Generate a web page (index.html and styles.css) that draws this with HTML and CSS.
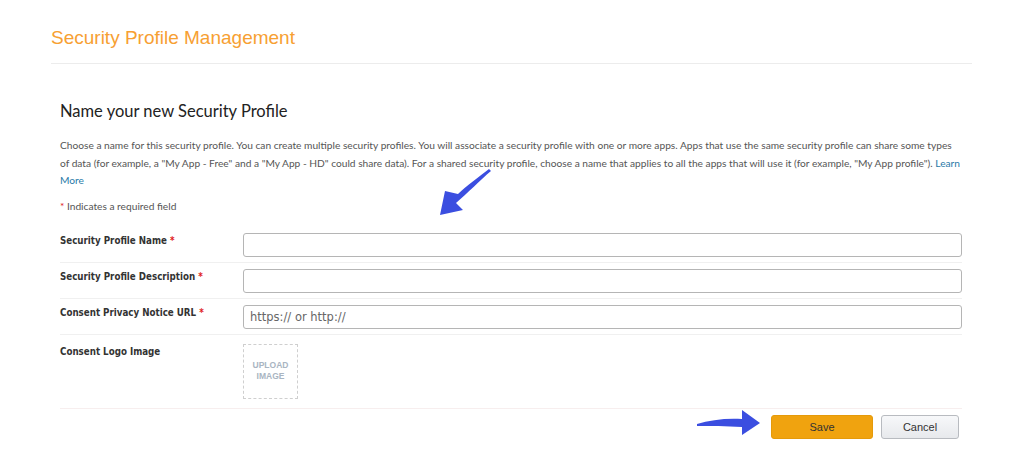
FILE: index.html
```html
<!DOCTYPE html>
<html lang="en">
<head>
    <meta charset="UTF-8">
    <title>Security Profile Management</title>
    <link rel="stylesheet" href="styles.css">
</head>
<body>
    <div class="page">
        <h1 class="page-title">Security Profile Management</h1>
        <div class="content">
            <h2>Name your new Security Profile</h2>
            <p class="intro">Choose a name for this security profile. You can create multiple security profiles. You will associate a security profile with one or more apps. Apps that use the same security profile can share some types of data (for example, a "My App - Free" and a "My App - HD" could share data). For a shared security profile, choose a name that applies to all the apps that will use it (for example, "My App profile"). <a href="#">Learn More</a></p>
            <p class="required-note"><span class="star">*</span> Indicates a required field</p>

            <form class="profile-form">
                <div class="row">
                    <label for="name">Security Profile Name <span class="star">*</span></label>
                    <input type="text" id="name">
                </div>
                <div class="row">
                    <label for="desc">Security Profile Description <span class="star">*</span></label>
                    <input type="text" id="desc">
                </div>
                <div class="row">
                    <label for="url">Consent Privacy Notice URL <span class="star">*</span></label>
                    <input type="text" id="url" placeholder="https:// or http://">
                </div>
                <div class="row row-logo">
                    <label>Consent Logo Image</label>
                    <div class="upload">UPLOAD<br>IMAGE</div>
                </div>
                <div class="actions">
                    <button type="button" class="btn btn-save">Save</button>
                    <button type="button" class="btn btn-cancel">Cancel</button>
                </div>
            </form>
        </div>

        <!-- annotation arrows -->
        <svg class="arrow arrow-down" width="70" height="60" viewBox="0 0 70 60">
            <path d="M59 9 C50 16 36 26 28 34 L15 31 L10 55 L33 50 L26 43 C38 33 50 20 61 11 Z" fill="#3b4ee0"/>
        </svg>
        <svg class="arrow arrow-right" width="75" height="36" viewBox="0 0 75 36">
            <path d="M7 19 C20 15 36 13 52 14 L52 5 L70 18 L52 30 L52 22 C36 21 20 21 7 21 Z" fill="#3b4ee0"/>
        </svg>
    </div>
</body>
</html>
```

FILE: styles.css
```css
body {
    margin: 0;
    background-color: #ffffff;
    font-family: Lato, "Open Sans", sans-serif;
    color: #333;
}
.page {
    position: relative;
    width: 921px;
    margin-left: 51px;
}
.page-title {
    margin: 0;
    padding-top: 27px;
    padding-bottom: 14px;
    font-family: "Liberation Sans", Arial, sans-serif;
    font-size: 19px;
    font-weight: normal;
    color: #f7a032;
    border-bottom: 1px solid #ececec;
}
.content {
    padding: 0 10px 0 9px;
}
h2 {
    margin: 37px 0 0 0;
    font-size: 16.5px;
    font-weight: normal;
    color: #222;
}
.intro {
    margin: 16px 0 0 0;
    font-size: 10.2px;
    line-height: 17.5px;
    color: #555;
}
.intro a {
    color: #2a7aa8;
    text-decoration: none;
}
.required-note {
    margin: 10px 0 0 0;
    font-size: 10.2px;
    color: #555;
}
.star {
    color: #e02020;
}
.profile-form {
    margin-top: 15px;
}
.row {
    display: flex;
    align-items: flex-start;
    padding: 6px 0 5px 0;
    border-bottom: 1px solid #f0f0f0;
}
.row label {
    width: 183px;
    padding-top: 2px;
    font-family: "DejaVu Sans", Verdana, sans-serif;
    font-stretch: condensed;
    font-size: 9.7px;
    font-weight: bold;
    color: #333;
}
.row input {
    flex: 1;
    height: 24px;
    box-sizing: border-box;
    border: 1px solid #b5b5b5;
    border-radius: 3px;
    padding: 0 6px;
    font-family: "DejaVu Sans", Verdana, sans-serif;
    font-size: 11.5px;
}
.row input::placeholder {
    color: #666;
}
.row-logo {
    padding-top: 9px;
    padding-bottom: 9px;
    border-bottom-color: #f7eeee;
}
.upload {
    width: 55px;
    height: 55px;
    box-sizing: border-box;
    border: 1px dashed #cfcfcf;
    display: flex;
    align-items: center;
    justify-content: center;
    text-align: center;
    font-family: "Liberation Sans", Arial, sans-serif;
    font-size: 8.5px;
    font-weight: bold;
    line-height: 11px;
    color: #a9b5c2;
}
.actions {
    display: flex;
    justify-content: flex-end;
    gap: 8px;
    padding: 6px 3px 0 0;
}
.btn {
    height: 24px;
    border-radius: 3px;
    font-family: "Liberation Sans", Arial, sans-serif;
    font-size: 11px;
    color: #333;
    cursor: pointer;
}
.btn-save {
    width: 102px;
    background-color: #f0a30f;
    border: 1px solid #e59a0a;
}
.btn-cancel {
    width: 78px;
    background: linear-gradient(#f7f8fa, #e7e9ec);
    border: 1px solid #b8bbc0;
}
.arrow {
    position: absolute;
}
.arrow-down {
    left: 379px;
    top: 160px;
}
.arrow-right {
    left: 639px;
    top: 405px;
}
```
